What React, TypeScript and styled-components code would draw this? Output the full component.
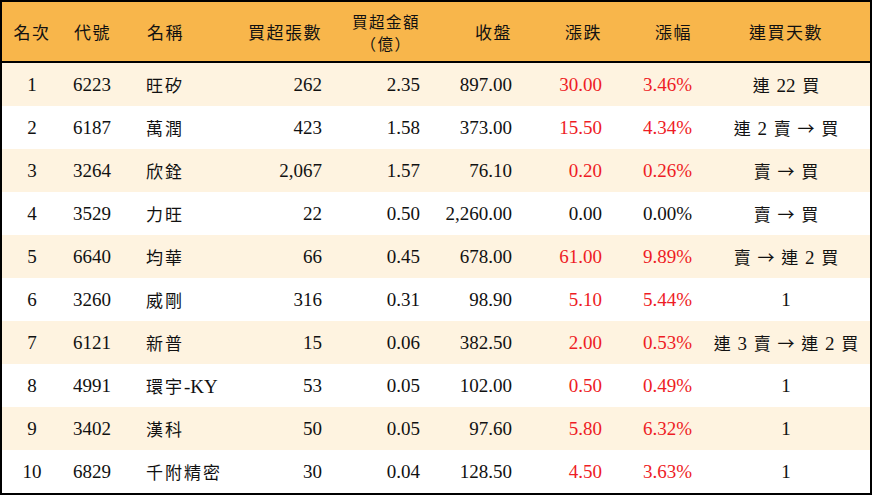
import React from 'react';
import styled, {createGlobalStyle} from 'styled-components';

const GlobalStyle = createGlobalStyle`
  body {
    margin: 0;
    background: #ffffff;
  }
`

const COLUMNS = '60px 73px 97px 100px 98px 92px 90px 90px 168px';

const Table = styled.div`
  width: 868px;
  border: 2px solid #000;
  font-family: "Liberation Serif", "Noto Sans CJK TC", serif;
  color: #111;
`

const HeaderRow = styled.div`
  display: grid;
  grid-template-columns: ${COLUMNS};
  height: 59px;
  background: #f8b64b;
  border-bottom: 2px solid #000;
  align-items: center;
`

const HeadCell = styled.div<{ $align: string }>`
  text-align: ${p => p.$align};
  padding: 0 ${p => p.$align === 'right' ? '10px' : '0'} 0 ${p => p.$align === 'left' ? '12px' : '0'};
  font-family: "Noto Sans CJK TC", serif;
  font-size: 17px;
  letter-spacing: 1.5px;
  line-height: 22px;
`

const Stacked = styled.span`
  display: inline-block;
  text-align: center;
  line-height: 22px;
  font-size: 15.5px;
`

const Row = styled.div<{ $shaded: boolean }>`
  display: grid;
  grid-template-columns: ${COLUMNS};
  height: 43px;
  align-items: center;
  background: ${p => p.$shaded ? '#fef3e0' : '#ffffff'};
`

const Cell = styled.div<{ $align: string; $red?: boolean }>`
  text-align: ${p => p.$align};
  padding: 0 ${p => p.$align === 'right' ? '10px' : '0'} 0 ${p => p.$align === 'left' ? '11px' : '0'};
  font-size: 19px;
  color: ${p => p.$red ? '#ee1c25' : '#111'};
  white-space: nowrap;
`

const Streak = styled(Cell)`
  word-spacing: 2px;
`

const Han = styled.span<{ $spaced?: boolean }>`
  font-family: "Noto Sans CJK TC", serif;
  font-size: 17px;
  letter-spacing: ${p => p.$spaced ? '2px' : '0'};
`

interface Stock {
    rank: number,
    code: string,
    name: string,
    lots: string,
    amount: string,
    close: string,
    change: string,
    pct: string,
    streak: string
}

const stocks: Stock[] = [
    {rank: 1, code: '6223', name: '旺矽', lots: '262', amount: '2.35', close: '897.00', change: '30.00', pct: '3.46%', streak: '連 22 買'},
    {rank: 2, code: '6187', name: '萬潤', lots: '423', amount: '1.58', close: '373.00', change: '15.50', pct: '4.34%', streak: '連 2 賣 → 買'},
    {rank: 3, code: '3264', name: '欣銓', lots: '2,067', amount: '1.57', close: '76.10', change: '0.20', pct: '0.26%', streak: '賣 → 買'},
    {rank: 4, code: '3529', name: '力旺', lots: '22', amount: '0.50', close: '2,260.00', change: '0.00', pct: '0.00%', streak: '賣 → 買'},
    {rank: 5, code: '6640', name: '均華', lots: '66', amount: '0.45', close: '678.00', change: '61.00', pct: '9.89%', streak: '賣 → 連 2 買'},
    {rank: 6, code: '3260', name: '威剛', lots: '316', amount: '0.31', close: '98.90', change: '5.10', pct: '5.44%', streak: '1'},
    {rank: 7, code: '6121', name: '新普', lots: '15', amount: '0.06', close: '382.50', change: '2.00', pct: '0.53%', streak: '連 3 賣 → 連 2 買'},
    {rank: 8, code: '4991', name: '環宇-KY', lots: '53', amount: '0.05', close: '102.00', change: '0.50', pct: '0.49%', streak: '1'},
    {rank: 9, code: '3402', name: '漢科', lots: '50', amount: '0.05', close: '97.60', change: '5.80', pct: '6.32%', streak: '1'},
    {rank: 10, code: '6829', name: '千附精密', lots: '30', amount: '0.04', close: '128.50', change: '4.50', pct: '3.63%', streak: '1'},
];

// split mixed text so the chinese characters (and the arrow) get the CJK font, digits stay serif
const CJK = /[\u4e00-\u9fff\u2192]/;
const mixed = (text: string, spaced = false) => {
    const parts = text.match(/[\u4e00-\u9fff\u2192]+|[^\u4e00-\u9fff\u2192]+/g) || [];
    return parts.map((part, i) => CJK.test(part)
        ? <Han key={i} $spaced={spaced}>{part}</Han>
        : <span key={i}>{part}</span>);
}

const isRed = (change: string) => parseFloat(change) > 0;

const App: React.FC = () => {
    return (
        <>
            <GlobalStyle/>
            <Table>
                <HeaderRow>
                    <HeadCell $align={"center"}>名次</HeadCell>
                    <HeadCell $align={"left"}>代號</HeadCell>
                    <HeadCell $align={"left"}>名稱</HeadCell>
                    <HeadCell $align={"right"}>買超張數</HeadCell>
                    <HeadCell $align={"right"}>
                        <Stacked>買超金額<br/>（億）</Stacked>
                    </HeadCell>
                    <HeadCell $align={"right"}>收盤</HeadCell>
                    <HeadCell $align={"right"}>漲跌</HeadCell>
                    <HeadCell $align={"right"}>漲幅</HeadCell>
                    <HeadCell $align={"center"}>連買天數</HeadCell>
                </HeaderRow>
                {stocks.map((stock, index) => (
                    <Row key={stock.code} $shaded={index % 2 === 0}>
                        <Cell $align={"center"}>{stock.rank}</Cell>
                        <Cell $align={"left"}>{stock.code}</Cell>
                        <Cell $align={"left"}>{mixed(stock.name, true)}</Cell>
                        <Cell $align={"right"}>{stock.lots}</Cell>
                        <Cell $align={"right"}>{stock.amount}</Cell>
                        <Cell $align={"right"}>{stock.close}</Cell>
                        <Cell $align={"right"} $red={isRed(stock.change)}>{stock.change}</Cell>
                        <Cell $align={"right"} $red={isRed(stock.change)}>{stock.pct}</Cell>
                        <Streak $align={"center"}>{mixed(stock.streak)}</Streak>
                    </Row>
                ))}
            </Table>
        </>
    )
}

export default App
